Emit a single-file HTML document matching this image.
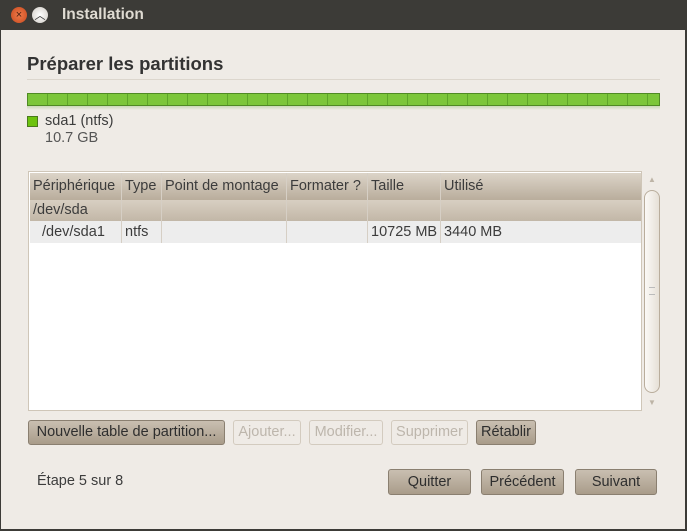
<!DOCTYPE html><html><head><style>
body{margin:0;width:687px;height:531px;background:#3c3b37;font-family:"Liberation Sans",sans-serif;font-size:14.5px;color:#3c3c3c;position:relative;overflow:hidden}
.win{position:absolute;left:1px;top:30px;width:684px;height:499px;background:#efebe6}
.a{position:absolute;white-space:nowrap}
.btn{position:absolute;height:25px;border:1px solid #8a7f70;border-radius:3px;background:linear-gradient(#c9bfb1,#a99c8a);box-sizing:border-box;text-align:center;line-height:23px;color:#2e2e2e;white-space:nowrap;overflow:hidden}
.dis{border-color:#d3cbbf;background:#efebe6;color:#bdb6ac}
.cell{position:absolute;top:0;height:100%;border-left:1px solid #d6cfc5;box-sizing:border-box;padding-left:3px;line-height:22px;white-space:nowrap;overflow:hidden}
</style></head><body>
<div class="a" style="left:11px;top:7px;width:16px;height:16px;border-radius:50%;background:radial-gradient(#f07a4a,#c84a1e);color:#4a2010;font-size:11px;text-align:center;line-height:16px">×</div>
<div class="a" style="left:32px;top:7px;width:16px;height:16px;border-radius:50%;background:radial-gradient(#fff,#cfcbc4);color:#333;font-size:11px;text-align:center;line-height:18px">︿</div>
<div class="a" style="left:62px;top:6px;color:#dfdbd2;font-weight:bold;font-size:15.5px">Installation</div>
<div class="win"></div>
<div class="a" style="left:27px;top:53px;font-weight:bold;font-size:18.5px;color:#333">Préparer les partitions</div>
<div class="a" style="left:27px;top:79px;width:633px;height:1px;background:#dcd6cd"></div>
<div class="a" style="left:27px;top:93px;width:633px;height:13px;background:repeating-linear-gradient(90deg,#7cc63a 0 19px,#5ea629 19px 20px);border:1px solid #4f8a24;box-sizing:border-box"></div>
<div class="a" style="left:27px;top:106px;width:633px;height:4px;background:linear-gradient(#c9d8b8,#efebe6)"></div>
<div class="a" style="left:27px;top:116px;width:11px;height:11px;background:#6dc30f;border:1px solid #4a7a1c;box-sizing:border-box"></div>
<div class="a" style="left:45px;top:113px">sda1 (ntfs)</div>
<div class="a" style="left:45px;top:130px;color:#555">10.7 GB</div>
<div class="a" style="left:28px;top:171px;width:614px;height:240px;border:1px solid #cfc6b8;background:#fff;box-sizing:border-box">
 <div class="a" style="left:1px;top:1px;width:611px;height:27px;background:linear-gradient(#dcd4c8,#b9ad9c)">
  <div class="cell" style="left:0;border:0;line-height:27px">Périphérique</div><div class="cell" style="left:91px;line-height:27px">Type</div><div class="cell" style="left:131px;line-height:27px">Point de montage</div><div class="cell" style="left:256px;line-height:27px">Formater ?</div><div class="cell" style="left:337px;line-height:27px">Taille</div><div class="cell" style="left:410px;line-height:27px">Utilisé</div></div>
 <div class="a" style="left:1px;top:28px;width:611px;height:21px;background:linear-gradient(#d8cfc2,#c2b7a7)">
  <div class="cell" style="left:0;border:0;line-height:21px">/dev/sda</div><div class="cell" style="left:91px"></div><div class="cell" style="left:131px"></div><div class="cell" style="left:256px"></div><div class="cell" style="left:337px"></div><div class="cell" style="left:410px"></div></div>
 <div class="a" style="left:1px;top:49px;width:611px;height:22px;background:#ededed">
  <div class="cell" style="left:0;border:0;padding-left:12px">/dev/sda1</div><div class="cell" style="left:91px">ntfs</div><div class="cell" style="left:131px"></div><div class="cell" style="left:256px"><div class="a" style="left:35px;top:6px;width:10px;height:10px;border:1px solid #ddd;box-sizing:border-box"></div></div><div class="cell" style="left:337px">10725 MB</div><div class="cell" style="left:410px">3440 MB</div></div>
</div>
<div class="a" style="left:648px;top:175px;font-size:8px;color:#bdb4a6">▲</div>
<div class="a" style="left:648px;top:398px;font-size:8px;color:#bdb4a6">▼</div>
<div class="a" style="left:644px;top:190px;width:16px;height:203px;border:1px solid #b9ad9c;border-radius:8px;background:linear-gradient(90deg,#fbf9f6,#e6e0d7);box-sizing:border-box"></div>
<div class="a" style="left:649px;top:287px;width:6px;height:6px;border-top:1px solid #bbb;border-bottom:1px solid #bbb"></div>
<div class="btn" style="left:28px;top:420px;width:197px">Nouvelle table de partition...</div>
<div class="btn dis" style="left:233px;top:420px;width:68px">Ajouter...</div>
<div class="btn dis" style="left:309px;top:420px;width:74px">Modifier...</div>
<div class="btn dis" style="left:391px;top:420px;width:77px">Supprimer</div>
<div class="btn" style="left:476px;top:420px;width:60px">Rétablir</div>
<div class="a" style="left:37px;top:473px">Étape 5 sur 8</div>
<div class="btn" style="left:388px;top:469px;width:83px;height:26px;line-height:24px">Quitter</div>
<div class="btn" style="left:481px;top:469px;width:83px;height:26px;line-height:24px">Précédent</div>
<div class="btn" style="left:575px;top:469px;width:82px;height:26px;line-height:24px">Suivant</div>
</body></html>
